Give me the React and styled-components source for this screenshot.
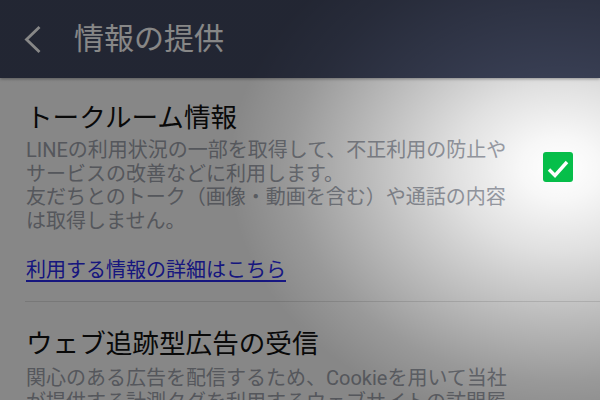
import React from "react";
import styled, { createGlobalStyle } from "styled-components";

const Global = createGlobalStyle`
  html, body { margin: 0; padding: 0; }
  body {
    width: 600px;
    height: 400px;
    overflow: hidden;
    background: #ffffff;
    font-family: Roboto, "Noto Sans CJK JP", sans-serif;
  }
`;

const Screen = styled.div`
  position: relative;
  width: 600px;
  height: 400px;
  overflow: hidden;
  background: #ffffff;
  display: flex;
  flex-direction: column;
`;

const Header = styled.header`
  flex: 0 0 78px;
  height: 78px;
  background: #414860;
  display: flex;
  align-items: center;
  padding-left: 23px;
  box-shadow: 0 1px 3px rgba(0, 0, 0, 0.35);
  position: relative;
  z-index: 1;
`;

const BackIcon = styled.svg`
  width: 20px;
  height: 30px;
  display: block;
`;

const HeaderTitle = styled.h1`
  margin: 0 0 0 31px;
  font-size: 30px;
  font-weight: 400;
  color: #ffffff;
  line-height: 36px;
`;

const Content = styled.main`
  flex: 1;
  display: flex;
  flex-direction: column;
`;

const Section = styled.section`
  display: flex;
  align-items: flex-start;
  padding: ${(p) => p.$top}px 27px ${(p) => p.$bottom}px 26px;
`;

const TextBlock = styled.div`
  flex: 1;
  min-width: 0;
`;

const Title = styled.h2`
  margin: 0;
  font-size: 26.6px;
  line-height: 32px;
  font-weight: 400;
  color: #111111;
`;

const Desc = styled.p`
  margin: ${(p) => p.$gap}px 0 0;
  font-size: 20px;
  line-height: 23.5px;
  color: #a0a4ad;
  white-space: nowrap;
`;

const Link = styled.a`
  display: inline-block;
  margin-top: 25px;
  font-size: 20px;
  line-height: 24px;
  color: #2a2aee;
  text-decoration: underline;
  text-underline-offset: 3px;
  text-decoration-thickness: 1.5px;
`;

const Divider = styled.hr`
  margin: 0 0 0 25px;
  border: 0;
  height: 1px;
  background: #e2e2e2;
`;

const CheckBox = styled.span`
  flex: 0 0 30px;
  width: 30px;
  height: 30px;
  margin-top: 50px;
  margin-left: 12px;
  border-radius: 3px;
  background: #06c04a;
  display: flex;
  align-items: center;
  justify-content: center;
`;

const Spotlight = styled.div`
  position: absolute;
  inset: 0;
  pointer-events: none;
  z-index: 5;
  background: radial-gradient(
    ellipse 330px 260px at 560px 168px,
    rgba(0, 0, 0, 0) 0%,
    rgba(0, 0, 0, 0.03) 12%,
    rgba(0, 0, 0, 0.12) 32%,
    rgba(0, 0, 0, 0.28) 60%,
    rgba(0, 0, 0, 0.4) 82%,
    rgba(0, 0, 0, 0.47) 100%
  );
`;

export default function App() {
  return (
    <>
      <Global />
      <Screen>
        <Header>
          <BackIcon viewBox="0 0 20 30">
            <polyline
              points="16.5,3 3.5,15.5 16.5,28"
              fill="none"
              stroke="#ffffff"
              strokeWidth="2.8"
            />
          </BackIcon>
          <HeaderTitle>情報の提供</HeaderTitle>
        </Header>
        <Content>
          <Section $top={24} $bottom={19}>
            <TextBlock>
              <Title>トークルーム情報</Title>
              <Desc $gap={5}>
                LINEの利用状況の一部を取得して、不正利用の防止や
                <br />
                サービスの改善などに利用します。
                <br />
                友だちとのトーク（画像・動画を含む）や通話の内容
                <br />
                は取得しません。
              </Desc>
              <Link href="#">利用する情報の詳細はこちら</Link>
            </TextBlock>
            <CheckBox>
              <svg width="30" height="30" viewBox="0 0 30 30">
                <polyline
                  points="6,17.5 12,23.5 24,10"
                  fill="none"
                  stroke="#ffffff"
                  strokeWidth="3.4"
                />
              </svg>
            </CheckBox>
          </Section>
          <Divider />
          <Section $top={26} $bottom={0}>
            <TextBlock>
              <Title>ウェブ追跡型広告の受信</Title>
              <Desc $gap={7}>
                関心のある広告を配信するため、Cookieを用いて当社
                <br />
                が提供する計測タグを利用するウェブサイトの訪問履
                <br />
                歴を取得します。
              </Desc>
            </TextBlock>
          </Section>
        </Content>
        <Spotlight />
      </Screen>
    </>
  );
}
